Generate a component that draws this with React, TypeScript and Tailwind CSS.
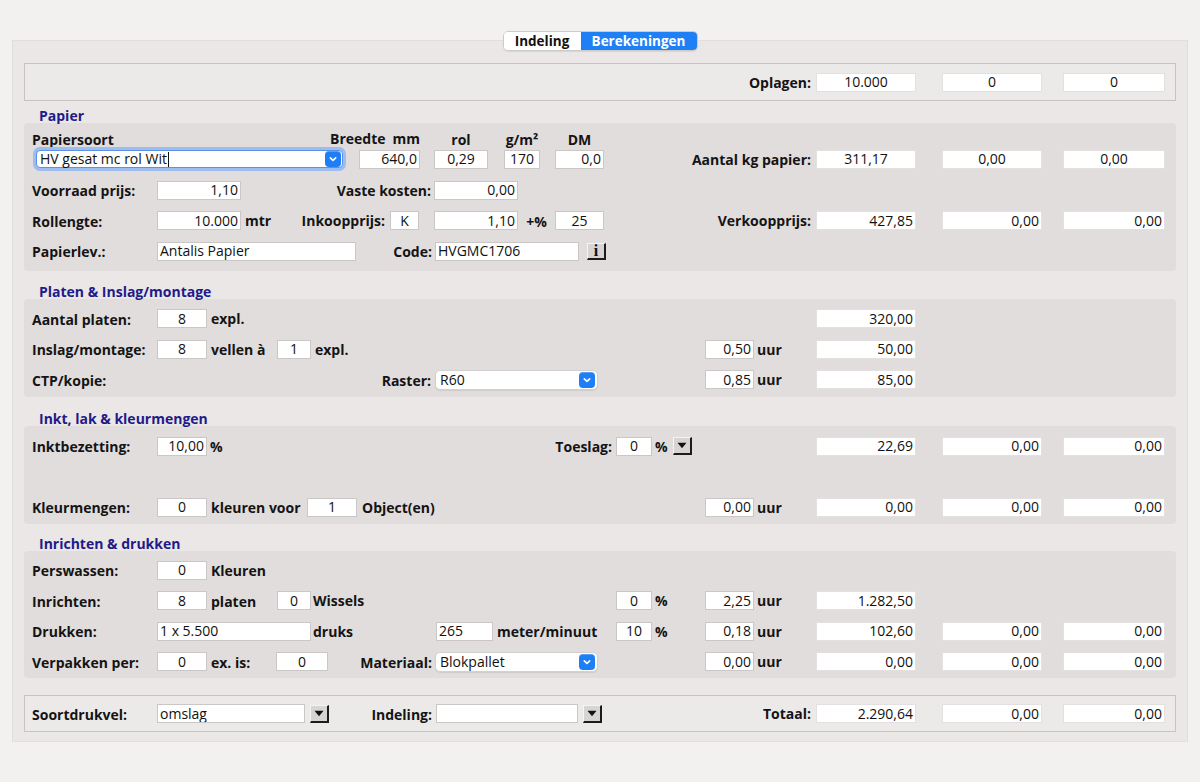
import React from "react";

type Align = "left" | "center" | "right";

const alignCls: Record<Align, string> = {
  left: "justify-start pl-[2px]",
  center: "justify-center",
  right: "justify-end pr-[2px]",
};

function Field({
  w,
  children,
  align = "right",
  faint = false,
  className = "",
}: {
  w: string;
  children?: React.ReactNode;
  align?: Align;
  faint?: boolean;
  className?: string;
}) {
  return (
    <div
      className={`${w} ${className} h-[19px] shrink-0 bg-white border ${
        faint ? "border-[#e4e0e0]" : "border-[#cbc7c7]"
      } flex items-center ${alignCls[align]} text-[14px] leading-none text-[#111] overflow-hidden whitespace-nowrap`}
    >
      {children}
    </div>
  );
}

function L({ children, className = "" }: { children: React.ReactNode; className?: string }) {
  return (
    <span className={`font-bold text-[14px] whitespace-nowrap text-[#141414] ${className}`}>
      {children}
    </span>
  );
}

function Chevron() {
  return (
    <div className="w-[16px] h-[16px] rounded-[4px] bg-[#1e7ef5] flex items-center justify-center shrink-0 shadow-[inset_0_1px_0_rgba(255,255,255,0.25)]">
      <svg width="10" height="10" viewBox="0 0 10 10">
        <path d="M2.3 3.8 L5 6.4 L7.7 3.8" fill="none" stroke="white" strokeWidth="1.6" strokeLinecap="round" strokeLinejoin="round" />
      </svg>
    </div>
  );
}

function Select({ w, value, className = "" }: { w: string; value: string; className?: string }) {
  return (
    <div
      className={`${w} ${className} h-[20px] shrink-0 bg-white rounded-[5px] border border-[#d3d0d0] shadow-[0_1px_1px_rgba(0,0,0,0.08)] flex items-center pl-[4px] pr-[2px] text-[14px] leading-none text-[#111]`}
    >
      <span className="flex-1 whitespace-nowrap">{value}</span>
      <Chevron />
    </div>
  );
}

function DropBtn({ className = "" }: { className?: string }) {
  return (
    <div
      className={`${className} w-[19px] h-[18px] shrink-0 bg-[#d6d4d4] border-t border-l border-t-[#f4f4f4] border-l-[#f4f4f4] border-r-2 border-b-2 border-r-[#1c1c1c] border-b-[#1c1c1c] flex items-center justify-center`}
    >
      <svg width="10" height="7" viewBox="0 0 10 7">
        <polygon points="0.5,0.8 9.5,0.8 5,6.2" fill="#111" />
      </svg>
    </div>
  );
}

function InfoBtn({ className = "" }: { className?: string }) {
  return (
    <div
      className={`${className} w-[19px] h-[17px] shrink-0 bg-[#d6d4d4] border-t border-l border-t-[#f4f4f4] border-l-[#f4f4f4] border-r-2 border-b-2 border-r-[#1c1c1c] border-b-[#1c1c1c] flex items-center justify-center font-['Liberation_Serif',serif] font-bold text-[16px] leading-none text-[#111]`}
    >
      i
    </div>
  );
}

function Vals({ v, align }: { v: (string | null)[]; align: Align }) {
  return (
    <div className="flex items-center shrink-0">
      {v[0] != null ? (
        <Field w="w-[100px]" align={align} faint>
          {v[0]}
        </Field>
      ) : (
        <div className="w-[100px] shrink-0" />
      )}
      {v[1] != null ? (
        <Field w="w-[100px]" align={align} faint className="ml-[26px]">
          {v[1]}
        </Field>
      ) : (
        <div className="w-[100px] ml-[26px] shrink-0" />
      )}
      {v[2] != null ? (
        <Field w="w-[102px]" align={align} faint className="ml-[21px]">
          {v[2]}
        </Field>
      ) : (
        <div className="w-[102px] ml-[21px] shrink-0" />
      )}
    </div>
  );
}

function Uur({ v }: { v: string }) {
  return (
    <div className="w-[111px] shrink-0 flex items-center">
      <Field w="w-[49px]" align="right">
        {v}
      </Field>
      <L className="ml-[3px]">uur</L>
    </div>
  );
}

function Pct({ v }: { v: string }) {
  return (
    <div className="w-[89px] shrink-0 flex items-center">
      <Field w="w-[36px]" align="center">
        {v}
      </Field>
      <L className="ml-[3px]">%</L>
    </div>
  );
}

function Row({ children, vals }: { children?: React.ReactNode; vals?: React.ReactNode }) {
  return (
    <div className="flex items-center h-[30.5px] pl-[8px]">
      <div className="w-[784px] shrink-0 flex items-center">{children}</div>
      {vals}
    </div>
  );
}

function Lab({ children }: { children: React.ReactNode }) {
  return (
    <div className="w-[125px] shrink-0">
      <L>{children}</L>
    </div>
  );
}

function Title({ children, className }: { children: React.ReactNode; className: string }) {
  return (
    <div className={`${className} pl-[15px] font-bold text-[14px] text-[#1f1b88] whitespace-nowrap`}>
      {children}
    </div>
  );
}

export default function App() {
  return (
    <div className="w-[1200px] min-h-[782px] bg-[#f3f0f0] pt-[40px] font-['Open_Sans',sans-serif] text-[#111]">
      <div className="ml-[12px] w-[1176px] h-[702px] bg-[#ebe7e7] border border-[#e2dede] px-[11px]">
        {/* Tabs */}
        <div className="flex justify-center -mt-[10px]">
          <div className="flex h-[20px] rounded-[5px] border border-[#cdcaca] overflow-hidden shadow-[0_1px_1px_rgba(0,0,0,0.08)]">
            <div className="w-[77px] bg-white flex items-center justify-center font-bold text-[13.5px] text-[#111]">
              Indeling
            </div>
            <div className="w-[116px] bg-[#1f80f6] flex items-center justify-center font-bold text-[13.5px] text-white">
              Berekeningen
            </div>
          </div>
        </div>

        {/* Oplagen */}
        <div className="mt-[12px] h-[38px] border border-[#c6c3c3] bg-[#ece9e9] flex items-center pl-[7px]">
          <div className="w-[784px] shrink-0 flex justify-end pr-[5px]">
            <L>Oplagen:</L>
          </div>
          <Vals v={["10.000", "0", "0"]} align="center" />
        </div>

        {/* Papier */}
        <Title className="pt-[8px] leading-[14px]">Papier</Title>
        <div className="bg-[#e1dddd] rounded-[4px] h-[148px] pt-[8px]">
          <div className="flex items-center h-[16px] pl-[8px] leading-[16px]">
            <div className="w-[298px] shrink-0">
              <L>Papiersoort</L>
            </div>
            <div className="w-[90px] shrink-0 flex justify-between">
              <L>Breedte</L>
              <L>mm</L>
            </div>
            <div className="ml-[14px] w-[54px] shrink-0 text-center">
              <L>rol</L>
            </div>
            <div className="ml-[16px] w-[36px] shrink-0 text-center">
              <L>g/m²</L>
            </div>
            <div className="ml-[15px] w-[49px] shrink-0 text-center">
              <L>DM</L>
            </div>
          </div>
          <div className="flex items-center h-[24px] pl-[8px]">
            <div className="w-[784px] shrink-0 flex items-center">
              <div className="ml-[1px] w-[313px] h-[24px] shrink-0 rounded-[7px] bg-[#9dbcf0] p-[3px]">
                <div className="h-full bg-white rounded-[4px] border border-[#5e90e6] flex items-center pl-[3px] pr-[1px] text-[14px] leading-none">
                  <span className="flex-1 flex items-center whitespace-nowrap">
                    HV gesat mc rol Wit
                    <span className="inline-block w-[1px] h-[15px] bg-[#111] ml-[1px]" />
                  </span>
                  <Chevron />
                </div>
              </div>
              <Field w="w-[61px]" align="right" className="ml-[13px]">
                640,0
              </Field>
              <Field w="w-[54px]" align="center" className="ml-[14px]">
                0,29
              </Field>
              <Field w="w-[36px]" align="center" className="ml-[16px]">
                170
              </Field>
              <Field w="w-[49px]" align="right" className="ml-[15px]">
                0,0
              </Field>
              <L className="ml-auto pr-[5px]">Aantal kg papier:</L>
            </div>
            <Vals v={["311,17", "0,00", "0,00"]} align="center" />
          </div>
          <div className="mt-[4px]">
            <Row>
              <Lab>Voorraad prijs:</Lab>
              <Field w="w-[84px]">1,10</Field>
              <div className="w-[190px] shrink-0 text-right">
                <L>Vaste kosten:</L>
              </div>
              <Field w="w-[84px]" className="ml-[3px]">
                0,00
              </Field>
            </Row>
            <Row
              vals={<Vals v={["427,85", "0,00", "0,00"]} align="right" />}
            >
              <Lab>Rollengte:</Lab>
              <Field w="w-[84px]">10.000</Field>
              <div className="w-[144px] shrink-0 flex justify-between pl-[4px]">
                <L>mtr</L>
                <L>Inkoopprijs:</L>
              </div>
              <Field w="w-[29px]" align="center" className="ml-[5px]">
                K
              </Field>
              <Field w="w-[84px]" className="ml-[15px]">
                1,10
              </Field>
              <div className="w-[37px] shrink-0 text-center">
                <L>+%</L>
              </div>
              <Field w="w-[49px]" align="center">
                25
              </Field>
              <L className="ml-auto pr-[5px]">Verkoopprijs:</L>
            </Row>
            <Row>
              <Lab>Papierlev.:</Lab>
              <Field w="w-[199px]" align="left">
                Antalis Papier
              </Field>
              <div className="w-[76px] shrink-0 text-right">
                <L>Code:</L>
              </div>
              <Field w="w-[144px]" align="left" className="ml-[3px]">
                HVGMC1706
              </Field>
              <InfoBtn className="ml-[8px]" />
            </Row>
          </div>
        </div>

        {/* Platen */}
        <Title className="pt-[14px] leading-[14px]">Platen &amp; Inslag/montage</Title>
        <div className="bg-[#e1dddd] rounded-[4px] h-[98px] pt-[4.5px]">
          <Row vals={<Vals v={["320,00", null, null]} align="right" />}>
            <Lab>Aantal platen:</Lab>
            <Field w="w-[50px]" align="center">
              8
            </Field>
            <L className="ml-[4px]">expl.</L>
          </Row>
          <Row vals={<Vals v={["50,00", null, null]} align="right" />}>
            <Lab>Inslag/montage:</Lab>
            <Field w="w-[50px]" align="center">
              8
            </Field>
            <div className="w-[70px] shrink-0 pl-[4px]">
              <L>vellen à</L>
            </div>
            <Field w="w-[34px]" align="center">
              1
            </Field>
            <L className="ml-[4px]">expl.</L>
            <div className="ml-auto">
              <Uur v="0,50" />
            </div>
          </Row>
          <Row vals={<Vals v={["85,00", null, null]} align="right" />}>
            <Lab>CTP/kopie:</Lab>
            <div className="w-[274px] shrink-0 text-right">
              <L>Raster:</L>
            </div>
            <Select w="w-[163px]" value="R60" className="ml-[4px]" />
            <div className="ml-auto">
              <Uur v="0,85" />
            </div>
          </Row>
        </div>

        {/* Inkt */}
        <Title className="pt-[14px] leading-[15px]">Inkt, lak &amp; kleurmengen</Title>
        <div className="bg-[#e1dddd] rounded-[4px] h-[98px] pt-[4.75px]">
          <Row vals={<Vals v={["22,69", "0,00", "0,00"]} align="right" />}>
            <div className="w-[584px] shrink-0 flex items-center">
              <Lab>Inktbezetting:</Lab>
              <Field w="w-[50px]">10,00</Field>
              <div className="flex-1 flex justify-between pl-[3px] pr-[4px]">
                <L>%</L>
                <L>Toeslag:</L>
              </div>
            </div>
            <Field w="w-[36px]" align="center">
              0
            </Field>
            <div className="w-[21px] shrink-0 pl-[3px]">
              <L>%</L>
            </div>
            <DropBtn />
          </Row>
          <Row />
          <Row vals={<Vals v={["0,00", "0,00", "0,00"]} align="right" />}>
            <Lab>Kleurmengen:</Lab>
            <Field w="w-[50px]" align="center">
              0
            </Field>
            <div className="w-[100px] shrink-0 pl-[4px]">
              <L>kleuren voor</L>
            </div>
            <Field w="w-[50px]" align="center">
              1
            </Field>
            <L className="ml-[5px]">Object(en)</L>
            <div className="ml-auto">
              <Uur v="0,00" />
            </div>
          </Row>
        </div>

        {/* Inrichten */}
        <Title className="pt-[12px] leading-[15px]">Inrichten &amp; drukken</Title>
        <div className="bg-[#e1dddd] rounded-[4px] h-[127px] pt-[4px]">
          <Row>
            <Lab>Perswassen:</Lab>
            <Field w="w-[50px]" align="center">
              0
            </Field>
            <L className="ml-[4px]">Kleuren</L>
          </Row>
          <Row vals={<Vals v={["1.282,50", null, null]} align="right" />}>
            <div className="w-[584px] shrink-0 flex items-center">
              <Lab>Inrichten:</Lab>
              <Field w="w-[50px]" align="center">
                8
              </Field>
              <div className="w-[70px] shrink-0 pl-[4px]">
                <L>platen</L>
              </div>
              <Field w="w-[34px]" align="center">
                0
              </Field>
              <L className="ml-[2px]">Wissels</L>
            </div>
            <Pct v="0" />
            <Uur v="2,25" />
          </Row>
          <Row vals={<Vals v={["102,60", "0,00", "0,00"]} align="right" />}>
            <div className="w-[584px] shrink-0 flex items-center">
              <Lab>Drukken:</Lab>
              <Field w="w-[154px]" align="left">
                1 x 5.500
              </Field>
              <div className="w-[125px] shrink-0 pl-[2px]">
                <L>druks</L>
              </div>
              <Field w="w-[57px]" align="left">
                265
              </Field>
              <L className="ml-[4px]">meter/minuut</L>
            </div>
            <Pct v="10" />
            <Uur v="0,18" />
          </Row>
          <Row vals={<Vals v={["0,00", "0,00", "0,00"]} align="right" />}>
            <Lab>Verpakken per:</Lab>
            <Field w="w-[50px]" align="center">
              0
            </Field>
            <div className="w-[69px] shrink-0 pl-[4px]">
              <L>ex. is:</L>
            </div>
            <Field w="w-[52px]" align="center">
              0
            </Field>
            <div className="w-[104px] shrink-0 text-right">
              <L>Materiaal:</L>
            </div>
            <Select w="w-[163px]" value="Blokpallet" className="ml-[3px]" />
            <div className="ml-auto">
              <Uur v="0,00" />
            </div>
          </Row>
        </div>

        {/* Bottom */}
        <div className="mt-[17px] h-[37px] border border-[#c6c3c3] bg-[#ece9e9] flex items-center pl-[7px]">
          <div className="w-[784px] shrink-0 flex items-center">
            <Lab>Soortdrukvel:</Lab>
            <Field w="w-[148px]" align="left">
              omslag
            </Field>
            <DropBtn className="ml-[5px]" />
            <div className="w-[103px] shrink-0 text-right">
              <L>Indeling:</L>
            </div>
            <Field w="w-[142px]" align="left" className="ml-[4px]" />
            <DropBtn className="ml-[5px]" />
            <L className="ml-auto pr-[5px]">Totaal:</L>
          </div>
          <Vals v={["2.290,64", "0,00", "0,00"]} align="right" />
        </div>
      </div>
    </div>
  );
}
